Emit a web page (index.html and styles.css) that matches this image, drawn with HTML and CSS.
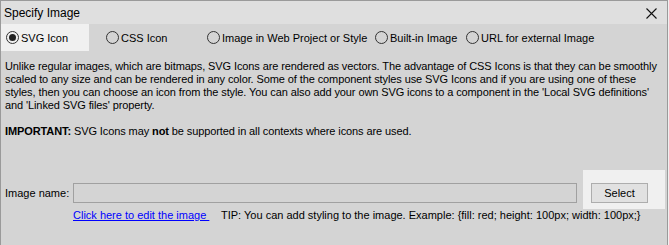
FILE: index.html
```html
<!DOCTYPE html>
<html lang="en">
<head>
    <meta charset="UTF-8">
    <meta name="viewport" content="width=device-width, initial-scale=1.0">
    <title>Specify Image</title>
    <link rel="stylesheet" href="styles.css">
</head>
<body>
    <div class="dialog">
        <div class="title-bar">
            <span class="title">Specify Image</span>
            <svg class="close" width="11" height="11" viewBox="0 0 11 11">
                <path d="M0.5 0.5 L10.5 10.5 M10.5 0.5 L0.5 10.5" stroke="#111" stroke-width="1.1" fill="none"/>
            </svg>
        </div>

        <div class="options">
            <label class="option option-svg active"><span class="radio checked"></span>SVG Icon</label>
            <label class="option option-css"><span class="radio"></span>CSS Icon</label>
            <label class="option option-web"><span class="radio"></span>Image in Web Project or Style</label>
            <label class="option option-builtin"><span class="radio"></span>Built-in Image</label>
            <label class="option option-url"><span class="radio"></span>URL for external Image</label>
        </div>

        <div class="content">
            <p class="info">
                Unlike regular images, which are bitmaps, SVG Icons are rendered as vectors. The advantage of CSS Icons is that they can be smoothly<br>
                scaled to any size and can be rendered in any color. Some of the component styles use SVG Icons and if you are using one of these<br>
                styles, then you can choose an icon from the style. You can also add your own SVG icons to a component in the 'Local SVG definitions'<br>
                and 'Linked SVG files' property.
            </p>
            <p class="info important"><b>IMPORTANT:</b> SVG Icons may <b>not</b> be supported in all contexts where icons are used.</p>

            <div class="name-row">
                <label class="name-label" for="imageName">Image name:</label>
                <input type="text" id="imageName" class="name-input">
                <div class="select-box">
                    <button type="button" class="select-btn">Select</button>
                </div>
            </div>
            <div class="hint-row">
                <a href="#" class="edit-link">Click here to edit the image&nbsp;</a>
                <span class="tip">TIP: You can add styling to the image. Example: {fill: red; height: 100px; width: 100px;}</span>
            </div>
        </div>
    </div>
</body>
</html>
```

FILE: styles.css
```css
body {
    margin: 0;
    padding: 0;
    background-color: #f0f0f0;
    font-family: "Liberation Sans", Arial, sans-serif;
    color: #000;
}

.dialog {
    width: 666px;
    height: 244px;
    border: 1px solid #9a9a9a;
    border-bottom: none;
    background-color: #d4d4d4;
}

.title-bar {
    height: 23px;
    background-color: #dfdfdf;
    display: flex;
    align-items: center;
    justify-content: space-between;
    padding: 0 10px 0 3px;
}

.title {
    font-size: 12px;
    margin-top: 1px;
}

.close {
    display: block;
    margin-top: 2px;
}

.options {
    display: flex;
    height: 27px;
    align-items: center;
    font-size: 11px;
}

.option {
    display: flex;
    align-items: center;
    height: 27px;
    padding-left: 5px;
    box-sizing: border-box;
    white-space: nowrap;
    flex-shrink: 0;
}

.option.active {
    background-color: #f0f0f0;
}

.option-svg { width: 88px; margin-right: 12px; }
.option-css { width: 101px; }
.option-web { width: 168px; }
.option-builtin { width: 91px; }

.radio {
    flex-shrink: 0;
    width: 11px;
    height: 11px;
    border: 1px solid #333;
    border-radius: 50%;
    margin-right: 2px;
    box-sizing: content-box;
    position: relative;
}

.radio.checked::after {
    content: "";
    position: absolute;
    left: 2px;
    top: 2px;
    width: 7px;
    height: 7px;
    border-radius: 50%;
    background-color: #222;
}

.content {
    padding: 9px 0 0 4px;
}

.info {
    margin: 0;
    font-size: 11px;
    line-height: 13px;
    letter-spacing: -0.1px;
    white-space: nowrap;
}

.important {
    margin-top: 13px;
}

.name-row {
    display: flex;
    align-items: flex-start;
    margin-top: 32px;
    font-size: 11px;
}

.name-label {
    width: 68px;
    margin-top: 17px;
}

.name-input {
    width: 504px;
    height: 20px;
    margin: 13px 0 0 0;
    padding: 0;
    border: 1px solid #a0a0a0;
    background-color: #d4d4d4;
    box-sizing: border-box;
}

.select-box {
    margin-left: 6px;
    padding: 13px 17px 6px 8px;
    background-color: #f0f0f0;
}

.select-btn {
    display: block;
    width: 57px;
    height: 20px;
    padding: 0;
    font-family: "Liberation Sans", Arial, sans-serif;
    font-size: 11px;
    color: #000;
    border: 1px solid #adadad;
    background-color: #e1e1e1;
}

.hint-row {
    display: flex;
    padding-left: 68px;
    font-size: 11px;
    line-height: 13px;
    margin-top: 0;
}

.edit-link {
    color: #0000ff;
    text-decoration: underline;
    width: 148px;
}

.tip {
    white-space: nowrap;
}
```
